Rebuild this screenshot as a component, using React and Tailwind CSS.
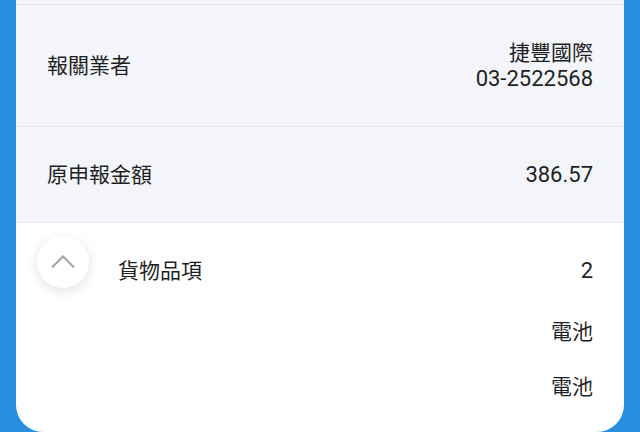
import React from 'react';

const font = { fontFamily: 'Roboto, "Noto Sans CJK TC", sans-serif' };

function Row({ label, children, height }) {
  return (
    <div className={`flex items-center justify-between px-[31px] bg-[#f3f5fa] border-b border-[#e3e6ee] ${height}`}>
      <span>{label}</span>
      <div className="text-right">{children}</div>
    </div>
  );
}

export default function App() {
  return (
    <div
      className="w-[640px] h-[432px] bg-[#2a8ee0] px-[16px] overflow-hidden text-[21px] leading-[26px] text-[#1f1f1f]"
      style={font}
    >
      <div className="bg-white rounded-b-[27px] h-full overflow-hidden flex flex-col">
        {/* tail of previous row */}
        <div className="h-[5px] bg-[#f3f5fa] border-b border-[#e3e6ee] shrink-0" />

        <Row label="報關業者" height="h-[122px]">
          <p>捷豐國際</p>
          <p className="text-[22px]">03-2522568</p>
        </Row>

        <Row label="原申報金額" height="h-[96px]">
          <p className="text-[22px]">386.57</p>
        </Row>

        {/* Goods */}
        <div className="relative flex-1 px-[31px] pt-[35px]">
          <button className="absolute left-[21px] top-[13px] w-[52px] h-[52px] rounded-full bg-white shadow-[0_3px_12px_rgba(0,0,0,0.12)] flex items-center justify-center">
            <svg width="26" height="14" viewBox="0 0 26 14" fill="none">
              <polyline points="2,12.5 13,1.5 24,12.5" stroke="#a3a3a3" strokeWidth="2" />
            </svg>
          </button>
          <div className="flex justify-between">
            <span className="pl-[71px]">貨物品項</span>
            <span className="text-[22px]">2</span>
          </div>
          <p className="text-right mt-[35px]">電池</p>
          <p className="text-right mt-[29px]">電池</p>
        </div>
      </div>
    </div>
  );
}
